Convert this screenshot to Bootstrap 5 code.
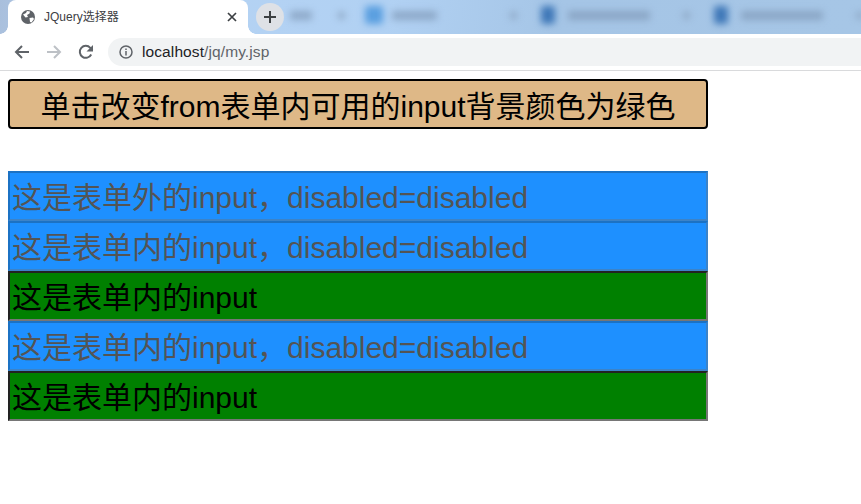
<!DOCTYPE html>
<html lang="zh-CN">
<head>
  <meta charset="UTF-8">
  <meta name="viewport" content="width=device-width, initial-scale=1">
  <title>JQuery选择器</title>
  <link href="https://cdn.jsdelivr.net/npm/bootstrap@5.3.0/dist/css/bootstrap.min.css" rel="stylesheet">
  <style>
    html, body { background: #fff; overflow: hidden; }
    body { font-family: "Liberation Sans", "Noto Sans CJK SC", sans-serif; }
    /* 浏览器外框 */
    .tab-strip { height: 34px; padding-left: 8px; overflow: hidden;
      background: linear-gradient(100deg, #a9bfdc 0, #b6d3f3 12%, #b1d1f3 45%, #a5c5e6 65%, #a6c6e6 100%); }
    .tab-active { position: relative; width: 240px; height: 34px; background: #fff; border-radius: 8px 8px 0 0; padding: 0 0 0 12px; flex: none; }
    .tab-active::before, .tab-active::after { content: ""; position: absolute; bottom: 0; width: 8px; height: 8px; }
    .tab-active::before { left: -8px; background: radial-gradient(circle at 0 0, transparent 7.500px, #fff 8px); }
    .tab-active::after { right: -8px; background: radial-gradient(circle at 100% 0, transparent 7.500px, #fff 8px); }
    .tab-active .tab-title { font-size: 12px; color: #3c4043; margin-left: 8px; width: 183px; white-space: nowrap; }
    .new-tab { position: relative; width: 28px; height: 28px; border-radius: 50%; background: #dee1e6; margin-left: 8px; flex: none; margin-top: 3px; }
    .blur-tabs { filter: blur(3.500px); height: 34px; margin-left: 6px; padding-bottom: 4px; }
    .blur-txt { height: 9px; background: #7f99b8; opacity: .7; border-radius: 2px; }
    .blur-txt-s { width: 22px; margin-right: 26px; }
    .blur-txt-m { width: 45px; margin-right: 73px; }
    .blur-txt-l { width: 82px; margin-right: 33px; }
    .blur-ico { width: 14px; height: 18px; border-radius: 3px; background: #3f78b8; margin-left: 24px; margin-right: 13px; }
    .blur-ico-lt { width: 18px; background: #5a9fe0; margin-left: 20px; margin-right: 9px; }
    .blur-x { width: 7px; height: 7px; background: #8ea8c6; border-radius: 2px; }
    .tool-bar { height: 37px; border-bottom: 1px solid #d9dadc; padding-top: 4px; padding-left: 6px; }
    .tool-btn { width: 32px; height: 28px; flex: none; }
    .omni { height: 28px; background: #f1f3f4; border-radius: 14px 0 0 14px; margin-left: 6px; padding-left: 11px; }
    .omni-url { font-size: 15.500px; letter-spacing: .1px; color: #5f6368; margin-left: 9px; line-height: 28px; }
    .omni-host { color: #202124; }
    /* 页面内容 */
    .page-body { padding: 8px; }
    .big-btn { display: block; width: 700px; height: 50px; padding: 4px 0 0; font-size: 30px; line-height: 44px; color: #000;
      background: #deb887; border: 2px solid #000; border-radius: 4px; margin-bottom: 42px; }
    .big-input { display: block; width: 700px; height: 50px; padding: 0 2px 2px; font-size: 30px; line-height: 44px;
      font-family: "Liberation Sans", "Noto Sans CJK SC", sans-serif;
      border: 2px solid #767676; border-radius: 0; outline: 0; }
    .big-input:enabled { background: #008000; color: #000; border-color: #222 #767676 #767676 #222; }
    .big-input:disabled { background: #1e90ff; color: #545454; opacity: 1; border-color: #1c72c4 #3c83c8 #3c83c8 #1c72c4; }
  </style>
</head>
<body>
  <!-- 标签栏 -->
  <div class="tab-strip d-flex">
    <div class="tab-active d-flex align-items-center">
      <svg width="16" height="16" viewBox="0 0 16 16"><circle cx="8" cy="8" r="7" fill="#5f6368"/><path d="M3 5.500 6 4l1-2 3 .5-.5 2L7 6 8 8 5.500 8.500ZM9.500 9l3.500-.5 1 1.500-2.500 3.500-1.500-.5Z" fill="#fff"/></svg>
      <span class="tab-title">JQuery选择器</span>
      <svg width="10" height="10" viewBox="0 0 10 10"><path d="M1 1l8 8M9 1l-8 8" stroke="#3c4043" stroke-width="1.700"/></svg>
    </div>
    <div class="new-tab d-flex align-items-center justify-content-center">
      <svg width="14" height="14" viewBox="0 0 14 14"><path d="M7 1v12M1 7h12" stroke="#3c4043" stroke-width="2"/></svg>
    </div>
    <div class="blur-tabs d-flex align-items-center">
      <div class="blur-txt blur-txt-s"></div>
      <div class="blur-x"></div>
      <div class="blur-ico blur-ico-lt"></div>
      <div class="blur-txt blur-txt-m"></div>
      <div class="blur-x"></div>
      <div class="blur-ico"></div>
      <div class="blur-txt blur-txt-l"></div>
      <div class="blur-x"></div>
      <div class="blur-ico"></div>
      <div class="blur-txt blur-txt-l"></div>
      <div class="blur-x"></div>
    </div>
  </div>
  <!-- 地址栏 -->
  <div class="tool-bar d-flex">
    <div class="tool-btn d-flex align-items-center justify-content-center">
      <svg width="16" height="16" viewBox="0 0 16 16"><path d="M15 8H2M8 2 2 8l6 6" fill="none" stroke="#5f6368" stroke-width="2"/></svg>
    </div>
    <div class="tool-btn d-flex align-items-center justify-content-center">
      <svg width="16" height="16" viewBox="0 0 16 16"><path d="M1 8h13M8 2l6 6-6 6" fill="none" stroke="#bdc1c6" stroke-width="2"/></svg>
    </div>
    <div class="tool-btn d-flex align-items-center justify-content-center">
      <svg width="16" height="16" viewBox="0 0 16 16"><path d="M13.200 10.500A6 6 0 1 1 12.300 3.800L14.500 6" fill="none" stroke="#5f6368" stroke-width="2"/><path d="M15 1v6.500H8.500Z" fill="#5f6368"/></svg>
    </div>
    <div class="omni flex-grow-1 d-flex align-items-center">
      <svg width="14" height="14" viewBox="0 0 14 14"><circle cx="7" cy="7" r="6" fill="none" stroke="#5f6368" stroke-width="1.500"/><path d="M7 6v4.500M7 3.500v1.500" stroke="#5f6368" stroke-width="1.500"/></svg>
      <span class="omni-url"><span class="omni-host">localhost</span>/jq/my.jsp</span>
    </div>
  </div>
  <!-- 页面 -->
  <div class="page-body">
    <button type="button" class="big-btn" id="changeBtn">单击改变from表单内可用的input背景颜色为绿色</button>
    <input class="big-input" type="text" value="这是表单外的input，disabled=disabled" disabled>
    <form>
      <input class="big-input" type="text" value="这是表单内的input，disabled=disabled" disabled>
      <input class="big-input" type="text" value="这是表单内的input">
      <input class="big-input" type="text" value="这是表单内的input，disabled=disabled" disabled>
      <input class="big-input" type="text" value="这是表单内的input">
    </form>
  </div>
  <script src="https://cdn.jsdelivr.net/npm/bootstrap@5.3.0/dist/js/bootstrap.bundle.min.js"></script>
</body>
</html>
